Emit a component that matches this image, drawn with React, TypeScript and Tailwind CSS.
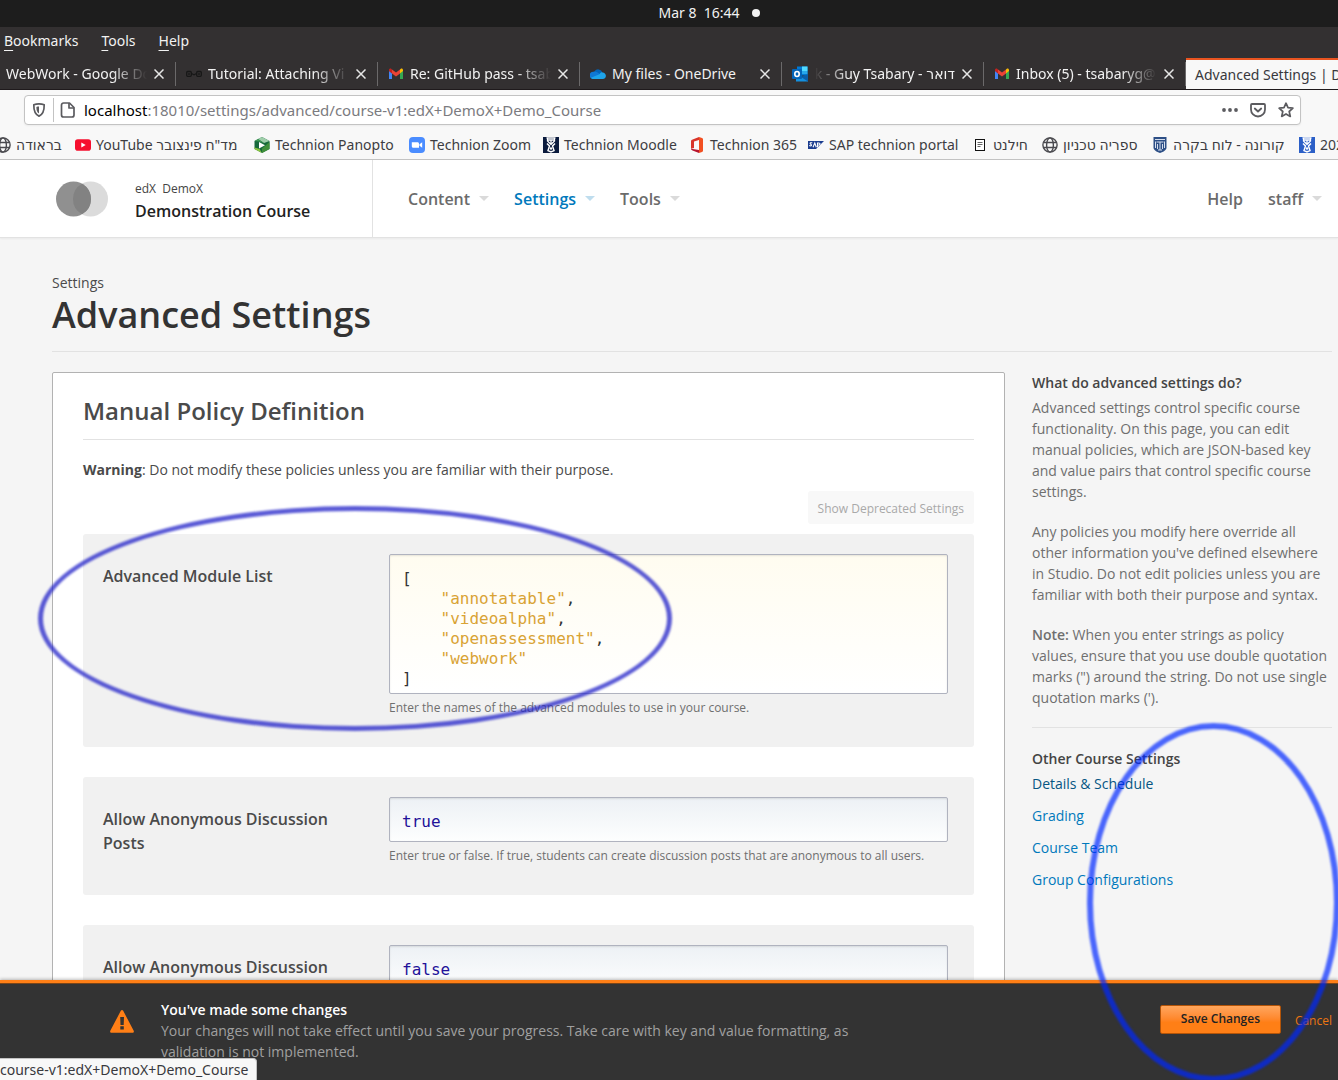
import type { ReactNode } from "react";

const sans = "font-['Open_Sans','Noto_Sans',sans-serif]";
const chrome = "font-['Noto_Sans','DejaVu_Sans',sans-serif]";
const mono = "font-['DejaVu_Sans_Mono',monospace]";

/* ---------- icons ---------- */

const GmailIcon = () => (
  <svg viewBox="0 0 16 16" className="size-4" aria-hidden="true">
    <path d="M1 3.500V13h3V7.200L1 4.800z" fill="#4285f4" />
    <path d="M12 7.200V13h3V4z" fill="#34a853" />
    <path d="M12 3.400v4l3-2.300V4c0-1.300-1.500-2-2.400-1.100z" fill="#fbbc04" />
    <path d="M4 3.400 8 6.600l4-3.200v4L8 10.600 4 7.400z" fill="#ea4335" />
    <path d="M1 4v1.100l3 2.300v-4l-.6-.5C2.400 2.100 1 2.800 1 4z" fill="#c5221f" />
  </svg>
);

const DocsIcon = () => (
  <svg viewBox="0 0 16 16" className="size-4" aria-hidden="true">
    <rect width="16" height="16" fill="#2684fc" />
    <path d="M4 5h8M4 8h8M4 11h5" stroke="#fff" />
  </svg>
);

const ChainIcon = () => (
  <svg viewBox="0 0 16 16" className="size-4" fill="none" stroke="#171717" strokeWidth="1.300" aria-hidden="true">
    <rect x=".7" y="5.500" width="4.600" height="4.800" rx="1" />
    <rect x="10.700" y="5.500" width="4.600" height="4.800" rx="1" />
    <path d="M3 7v2M13 7v2M5.500 7.500 8 8.800l2.500-1.300" />
  </svg>
);

const OneDriveIcon = () => (
  <svg viewBox="0 0 16 16" className="size-4" aria-hidden="true">
    <path d="M4.500 5.200A4.500 4.500 0 0 1 12.400 6.500L7 10z" fill="#0364b8" />
    <path d="M3.500 5.800c1.200-.5 2.400-.3 3.300.3L12 9.500 3 13A3.600 3.600 0 0 1 3.500 5.800z" fill="#0f78d4" />
    <path d="M9.500 8.200c.8-1.600 2-2 3-1.800 4.500.3 4.500 6.500.2 6.600H3.500c-1 0-2-.5-2.600-1.300z" fill="#1ea4ea" />
  </svg>
);

const OutlookIcon = () => (
  <svg viewBox="0 0 16 16" className="size-4" aria-hidden="true">
    <rect x="5" y=".5" width="10.500" height="9" fill="#0078d4" />
    <path d="M10 .5h5.500V5H10z" fill="#50d9ff" />
    <path d="M10 5h5.500v3H10z" fill="#28a8ea" />
    <path d="M4 8l6 3 6-3v7.500H4z" fill="#1490df" />
    <path d="M16 8v7.500L9 11z" fill="#0a5ea8" />
    <rect y="3" width="10" height="10" rx="1" fill="#0364b8" />
    <ellipse cx="5" cy="8" rx="2.200" ry="2.500" fill="none" stroke="#fff" strokeWidth="1.600" />
  </svg>
);

const GlobeIcon = () => (
  <svg viewBox="0 0 16 16" className="size-4" fill="none" stroke="#4a4a4f" strokeWidth="1.400" aria-hidden="true">
    <circle cx="8" cy="8" r="7.100" />
    <ellipse cx="8" cy="8" rx="3.400" ry="7.100" />
    <path d="M1.500 5.500h13M1.500 10.500h13" />
  </svg>
);

const YouTubeIcon = () => (
  <svg viewBox="0 0 16 16" className="size-4" aria-hidden="true">
    <rect y="2.300" width="16" height="11.400" rx="2.800" fill="#f60f2e" />
    <path d="M6.300 5.500v5L10.700 8z" fill="#fff" />
  </svg>
);

const PanoptoIcon = () => (
  <svg viewBox="0 0 16 16" className="size-4" aria-hidden="true">
    <path d="M8 0l7.500 4v8L8 16 .5 12V4z" fill="#17693c" />
    <path d="M8 0l7.500 4L10 6 4 2.100z" fill="#9fceaa" />
    <path d="M4 2.100 10 6 5 4.500.5 4z" fill="#3f9a56" />
    <path d="M15.500 5v7L8 16v-4.500z" fill="#3f8f3a" />
    <path d="M.5 10.500 5.500 12 8 16 .5 12z" fill="#8dc63f" />
    <path d="M5 5l6 3.200-6 3.300z" fill="#fff" />
  </svg>
);

const ZoomIcon = () => (
  <svg viewBox="0 0 16 16" className="size-4" aria-hidden="true">
    <rect width="16" height="16" rx="4" fill="#4a8cff" />
    <path d="M2.800 5.200h5.700c.9 0 1.500.6 1.500 1.500v4.100H4.300c-.9 0-1.500-.6-1.500-1.500zM10.500 7.200l2.700-1.900v5.400l-2.700-1.900z" fill="#fff" />
  </svg>
);

const CrestIcon = ({ fill }: { fill: string }) => (
  <svg viewBox="0 0 16 16" className="size-4" aria-hidden="true">
    <rect width="16" height="16" fill={fill} />
    <path d="M3.500 1h9M4 3h8M4.500 1v3l3 3M11.500 1v3l-3 3M8 3v5" stroke="#fff" strokeWidth="1.300" fill="none" />
    <path d="M4 6.500l2.500 2.500L5 13.500 8 15l3-1.500L9.500 9 12 6.500" stroke="#fff" strokeWidth="1.500" fill="none" />
    <circle cx="8" cy="11.500" r="1.200" fill="#fff" />
  </svg>
);

const OfficeIcon = () => (
  <svg viewBox="0 0 16 16" className="size-4" aria-hidden="true">
    <path d="M10 0 3 2.800C2.300 3 2 3.500 2 4.200v7.600L5 11V4.500L10 3z" fill="#d8342a" />
    <path d="M10 0l3 1c.7.200 1 .7 1 1.300v11.400c0 .6-.3 1.100-1 1.300l-3 1z" fill="#f25022" />
    <path d="M2 11.800 10 13v3l-6.500-2.600C2.400 13 2 12.600 2 11.800z" fill="#b7152f" />
  </svg>
);

const SapIcon = () => (
  <svg viewBox="0 0 16 16" className="size-4" aria-hidden="true">
    <path d="M0 4h16L8 12H0z" fill="#1b3d8f" />
    <path d="M4.300 5.800H2.500c-1.500 1.200 1.500 1.500 1 2.500-.3.800-1.500.6-2.300.2M5 10.200 6.800 6l1.500 4.200M9.500 10.200V6h1.300c1.800.2 1.600 2.300-1 2.300" stroke="#fff" strokeWidth="1.100" fill="none" />
  </svg>
);

const SheetIcon = () => (
  <svg viewBox="0 0 16 16" className="size-4" fill="none" aria-hidden="true">
    <rect x="3.500" y="2.500" width="9" height="11" fill="#fff" stroke="#111" />
    <path d="M5.500 5.500h5M5.500 7.500h5M5.500 9.500h3" stroke="#555" strokeWidth=".9" />
  </svg>
);

const ShieldCrestIcon = () => (
  <svg viewBox="0 0 16 16" className="size-4" aria-hidden="true">
    <path d="M1.500 0h13v10.500c0 2.500-3 4.500-6.500 5.500-3.500-1-6.500-3-6.500-5.500z" fill="#2d4f86" />
    <path d="M3 2.500h10M4.500 5h7M8 5v8M3.500 4.500v6.500M12.500 4.500v6.500M5.500 7v5M10.500 7v5M6 13h4" stroke="#d5deec" fill="none" />
  </svg>
);

const TrackingShieldIcon = () => (
  <svg viewBox="0 0 16 16" className="size-4" aria-hidden="true">
    <path d="M8 1.800c1.800 0 3.700.3 5.200.9.100 5.200-.7 9.400-5.200 11.400C3.500 12.100 2.700 7.900 2.800 2.700 4.300 2.100 6.200 1.800 8 1.800z" fill="none" stroke="#5b5b5f" strokeWidth="1.700" strokeLinejoin="round" />
    <path d="M8 4.500c-.9 0-1.800.1-2.600.4 0 3.200.5 5.300 2.600 6.600z" fill="#5b5b5f" />
  </svg>
);

const PageIcon = () => (
  <svg viewBox="0 0 16 16" className="size-4" fill="none" stroke="#5b5b5f" strokeWidth="1.700" strokeLinejoin="round" aria-hidden="true">
    <path d="M3.500 1h6l4.500 4.500V13a2 2 0 0 1-2 2H3.500a2 2 0 0 1-2-2V3a2 2 0 0 1 2-2z" />
    <path d="M9 1v5h5" />
  </svg>
);

const DotsIcon = () => (
  <svg viewBox="0 0 16 16" className="size-4" fill="#5b5b5f" aria-hidden="true">
    <circle cx="2" cy="8" r="1.900" />
    <circle cx="8" cy="8" r="1.900" />
    <circle cx="14" cy="8" r="1.900" />
  </svg>
);

const PocketIcon = () => (
  <svg viewBox="0 0 16 16" className="size-4" fill="none" stroke="#5b5b5f" strokeWidth="1.800" strokeLinecap="round" strokeLinejoin="round" aria-hidden="true">
    <path d="M2 2h12a1 1 0 0 1 1 1v4.500a7 7 0 0 1-14 0V3a1 1 0 0 1 1-1z" />
    <path d="M4.800 6.500 8 9.500l3.200-3" />
  </svg>
);

const StarIcon = () => (
  <svg viewBox="0 0 16 16" className="size-4" fill="none" stroke="#5b5b5f" strokeWidth="1.700" strokeLinejoin="round" aria-hidden="true">
    <path d="M8 1.200l2 4.500 4.900.5-3.700 3.300 1.100 4.900L8 11.900l-4.300 2.500 1.100-4.900L1.100 6.200 6 5.700z" />
  </svg>
);

const CloseIcon = () => (
  <svg viewBox="0 0 10 10" className="size-2.5" stroke="#e6e6e6" strokeWidth="1.500" aria-hidden="true">
    <path d="M.5.5l9 9M9.500.5l-9 9" />
  </svg>
);

const WarningIcon = () => (
  <svg viewBox="0 0 24 23" className="h-[23px] w-6 shrink-0" aria-hidden="true">
    <path d="M10.800.8c.5-1 1.900-1 2.400 0l10.500 20c.5 1-.1 2-1.200 2h-21c-1.100 0-1.700-1-1.200-2z" fill="#ff7f16" />
    <path d="M10.200 7h3.800l-.3 8h-3.200zM10.300 16.200h3.500v3.200h-3.500z" fill="#333" />
  </svg>
);

const LogoIcon = () => (
  <svg viewBox="0 0 52 36" className="h-9 w-[52px] shrink-0" role="img" aria-label="Studio">
    <circle cx="34.500" cy="18" r="17.500" fill="#dbdbdb" />
    <circle cx="17.500" cy="18" r="17.500" fill="#909090" />
    <path d="M26 2.700a17.500 17.500 0 0 1 0 30.600 17.500 17.500 0 0 1 0-30.600z" fill="#828282" />
  </svg>
);

const Caret = () => <span className="border-x-5 border-t-5 border-x-transparent border-t-current opacity-25" />;

/* ---------- browser window ---------- */

type Tab = { title: string; icon: ReactNode; fade: "right" | "left" | "none" };

const tabs: Tab[] = [
  { title: "WebWork - Google Do", icon: <DocsIcon />, fade: "right" },
  { title: "Tutorial: Attaching Vi", icon: <ChainIcon />, fade: "right" },
  { title: "Re: GitHub pass - tsab", icon: <GmailIcon />, fade: "right" },
  { title: "My files - OneDrive", icon: <OneDriveIcon />, fade: "none" },
  { title: "k - Guy Tsabary - דואר", icon: <OutlookIcon />, fade: "left" },
  { title: "Inbox (5) - tsabaryg@", icon: <GmailIcon />, fade: "right" },
];

const fades = {
  right: "[mask-image:linear-gradient(to_right,#000_75%,transparent)]",
  left: "justify-end [mask-image:linear-gradient(to_left,#000_75%,transparent)]",
  none: "",
};

const bookmarks = [
  { label: "בראודה", icon: <GlobeIcon />, width: "w-20" },
  { label: 'YouTube מד"ח פינצובר', icon: <YouTubeIcon />, width: "w-[179px]" },
  { label: "Technion Panopto", icon: <PanoptoIcon />, width: "w-[155px]" },
  { label: "Technion Zoom", icon: <ZoomIcon />, width: "w-[134px]" },
  { label: "Technion Moodle", icon: <CrestIcon fill="#0b1b3d" />, width: "w-[146px]" },
  { label: "Technion 365", icon: <OfficeIcon />, width: "w-[119px]" },
  { label: "SAP technion portal", icon: <SapIcon />, width: "w-[164px]" },
  { label: "חילנט", icon: <SheetIcon />, width: "w-[70px]" },
  { label: "ספריה טכניון", icon: <GlobeIcon />, width: "w-[110px]" },
  { label: "קורונה - לוח בקרה", icon: <ShieldCrestIcon />, width: "w-[147px]" },
  { label: "2021", icon: <CrestIcon fill="#2b5fc7" />, width: "w-20" },
];

function BrowserChrome() {
  return (
    <div className={`shrink-0 text-[15px] ${chrome}`}>
      <div className="flex h-[27px] items-center justify-center gap-3 bg-[#1d1d1d] pb-0.5 pl-20 text-sm text-[#f2f2f2]">
        <time className="whitespace-pre">Mar 8  16:44</time>
        <span className="size-2 rounded-full bg-[#f2f2f2]" />
      </div>

      <div className="border-b border-[#1f1a1c] bg-[#333031] text-[#f2f2f2]">
        <nav aria-label="Menu" className="flex h-[31px] items-center gap-[23px] px-1 pb-1 text-sm">
          {["Bookmarks", "Tools", "Help"].map((m) => (
            <button key={m} type="button">
              <span className="underline underline-offset-4">{m[0]}</span>
              {m.slice(1)}
            </button>
          ))}
        </nav>
        <div role="tablist" className="-ml-[26px] flex h-[31px] overflow-hidden text-sm">
          {tabs.map((t) => (
            <div key={t.title} className="flex w-[202px] shrink-0 items-center pl-2.5">
              {t.icon}
              <button
                type="button"
                role="tab"
                aria-selected="false"
                className={`ml-1.5 flex w-[141px] overflow-hidden whitespace-nowrap ${fades[t.fade]}`}
              >
                {t.title}
              </button>
              <button type="button" aria-label={`Close ${t.title}`} className="ml-[7px]">
                <CloseIcon />
              </button>
              <span className="ml-auto h-6 w-px bg-[#6b696a]" />
            </div>
          ))}
          <button
            type="button"
            role="tab"
            aria-selected="true"
            className="grow overflow-hidden border-t-2 border-[#e95420] bg-[#f8f8f8] pl-[9px] text-left whitespace-nowrap text-[#38383d]"
          >
            Advanced Settings | D
          </button>
        </div>
      </div>

      <div className="border-b border-[#c3c3c3] bg-[#f8f8f8] pt-[5px]">
        <div className="mr-[37px] ml-6 flex h-[30px] items-center rounded border border-[#c3c3c3] bg-white px-1.5 shadow-xs">
          <button type="button" aria-label="Tracking protection">
            <TrackingShieldIcon />
          </button>
          <span className="mr-1.5 ml-1.5 h-6 w-px bg-[#c3c3c3]" />
          <button type="button" aria-label="Site information">
            <PageIcon />
          </button>
          <div className="ml-2 grid grow items-center">
            <span aria-hidden="true" className="pointer-events-none col-start-1 row-start-1 text-[#7b7b80]">
              <span className="text-black">localhost</span>:18010/settings/advanced/course-v1:edX+DemoX+Demo_Course
            </span>
            <input
              aria-label="Address"
              className="col-start-1 row-start-1 w-full bg-transparent text-transparent caret-black outline-none"
              defaultValue="localhost:18010/settings/advanced/course-v1:edX+DemoX+Demo_Course"
            />
          </div>
          <div className="flex gap-3">
            <button type="button" aria-label="Page actions">
              <DotsIcon />
            </button>
            <button type="button" aria-label="Save to Pocket">
              <PocketIcon />
            </button>
            <button type="button" aria-label="Bookmark this page">
              <StarIcon />
            </button>
          </div>
        </div>
        <nav aria-label="Bookmarks" className="-ml-[5px] flex h-[34px] items-center overflow-hidden pt-1.5 text-sm text-[#3d3d42]">
          {bookmarks.map((b) => (
            <a key={b.label} href="#" className={`flex shrink-0 items-center gap-[5px] whitespace-nowrap ${b.width}`}>
              {b.icon}
              {b.label}
            </a>
          ))}
        </nav>
      </div>
    </div>
  );
}

/* ---------- course studio page ---------- */

function StudioHeader() {
  return (
    <header className="flex h-[78px] items-stretch border-b border-[#e2e2e2] bg-white pr-4 pl-14 font-semibold shadow-xs">
      <a href="#" className="flex w-[317px] shrink-0 items-center gap-[27px] border-r border-[#e2e2e2]">
        <LogoIcon />
        <span className="flex flex-col pt-1 text-[#222]">
          <span className="text-xs leading-5 font-normal text-[#444]">edX&nbsp; DemoX</span>
          <span className="text-base leading-6">Demonstration Course</span>
        </span>
      </a>
      <nav aria-label="Course" className="flex grow items-center gap-[25px] pl-[35px] text-base text-[#6b6b6b]">
        <button type="button" className="flex items-center gap-[9px]">
          Content <Caret />
        </button>
        <button type="button" className="flex items-center gap-[9px] text-[#0079bc]">
          Settings <Caret />
        </button>
        <button type="button" className="flex items-center gap-[9px]">
          Tools <Caret />
        </button>
        <a href="#" className="ml-auto">
          Help
        </a>
        <button type="button" className="flex items-center gap-[9px]">
          staff <Caret />
        </button>
      </nav>
    </header>
  );
}

const modules = ["annotatable", "videoalpha", "openassessment", "webwork"];

type PolicyProps = { id: string; label: string; help: string; children: ReactNode };

function Policy({ id, label, help, children }: PolicyProps) {
  return (
    <div className="flex rounded-[3px] bg-[#f1f1f1] py-5 pr-[26px] pl-5">
      <label htmlFor={id} className="w-[286px] shrink-0 pt-2.5 pr-10 text-base leading-6 font-semibold text-[#4a4a4a]">
        {label}
      </label>
      <div className="flex grow flex-col pb-[9px]">
        {children}
        <p className="mt-1 text-xs leading-5 text-[#6f6f6f]">{help}</p>
      </div>
    </div>
  );
}

function ValueField({ id, value }: { id: string; value: string }) {
  return (
    <input
      id={id}
      defaultValue={value}
      className={`h-[45px] w-full rounded-xs border border-[#b0b3bf] bg-linear-to-b from-[#edf1f5] to-[#fdfefe] px-3 pt-1 text-base text-[#221199] shadow-[inset_0_1px_2px_rgba(0,0,0,0.1)] ${mono}`}
    />
  );
}

function ModuleListField({ id }: { id: string }) {
  const source = `[\n${modules.map((m) => `    "${m}"`).join(",\n")}\n]`;
  return (
    <div
      className={`grid h-[140px] rounded-xs border border-[#b0b3bf] bg-linear-to-b from-[#fffcf0] to-white px-3 pt-3.5 text-base leading-5 shadow-[inset_0_1px_2px_rgba(0,0,0,0.1)] ${mono}`}
    >
      <pre aria-hidden="true" className={`pointer-events-none col-start-1 row-start-1 text-[#333] ${mono}`}>
        {"[\n"}
        {modules.map((m, i) => (
          <span key={m}>
            {"    "}
            <span className="text-[#d9a334]">{`"${m}"`}</span>
            {i < modules.length - 1 ? ",\n" : "\n"}
          </span>
        ))}
        {"]"}
      </pre>
      <textarea
        id={id}
        spellCheck={false}
        defaultValue={source}
        className="col-start-1 row-start-1 resize-none overflow-hidden bg-transparent text-transparent caret-black outline-none"
      />
    </div>
  );
}

function Sidebar() {
  return (
    <aside className="w-[300px] shrink-0 text-sm leading-[21px] text-[#6f6f6f]">
      <h3 className="mb-1 font-semibold text-[#444]">What do advanced settings do?</h3>
      <p className="mb-[19px]">
        Advanced settings control specific course functionality. On this page, you can edit manual policies, which are
        JSON-based key and value pairs that control specific course settings.
      </p>
      <p className="mb-[19px]">
        Any policies you modify here override all other information you've defined elsewhere in Studio. Do not edit
        policies unless you are familiar with both their purpose and syntax.
      </p>
      <p className="mb-[19px]">
        <strong className="font-semibold">Note:</strong> When you enter strings as policy values, ensure that you use
        double quotation marks (") around the string. Do not use single quotation marks (').
      </p>
      <h3 className="mb-1 border-t border-[#e2e2e2] pt-5 font-semibold text-[#444]">Other Course Settings</h3>
      <ul className="flex flex-col gap-[11px] text-[#0079bc]">
        <li>
          <a href="#" className="text-[#065683]">
            Details &amp; Schedule
          </a>
        </li>
        <li>
          <a href="#">Grading</a>
        </li>
        <li>
          <a href="#">Course Team</a>
        </li>
        <li>
          <a href="#">Group Configurations</a>
        </li>
      </ul>
    </aside>
  );
}

function SettingsPage() {
  return (
    <main className="pt-[34px] pr-1.5 pl-[52px]">
      <header className="mb-5 border-b border-[#e2e2e2] pb-3.5">
        <p className="text-sm leading-[21px] text-[#4a4a4a]">Settings</p>
        <h1 className="text-4xl leading-[44px] font-semibold text-[#333]">Advanced Settings</h1>
      </header>
      <div className="flex gap-[27px]">
        <section className="grow rounded-xs border border-[#b2b2b2] bg-white p-[30px] pt-[23px]">
          <h2 className="mb-5 border-b border-[#e2e2e2] pb-[13px] text-2xl leading-[30px] font-semibold text-[#4a4a4a]">
            Manual Policy Definition
          </h2>
          <p className="mb-[11px] text-sm leading-5 text-[#4a4a4a]">
            <strong className="font-bold">Warning</strong>: Do not modify these policies unless you are familiar with
            their purpose.
          </p>
          <div className="mb-2.5 flex justify-end">
            <button type="button" className="h-[33px] rounded-[3px] bg-[#f8f8f8] px-2.5 pt-0.5 text-xs text-[#a9a9a9]">
              Show Deprecated Settings
            </button>
          </div>
          <div className="flex flex-col gap-[30px]">
            <Policy
              id="advanced-modules"
              label="Advanced Module List"
              help="Enter the names of the advanced modules to use in your course."
            >
              <ModuleListField id="advanced-modules" />
            </Policy>
            <Policy
              id="anonymous-all"
              label="Allow Anonymous Discussion Posts"
              help="Enter true or false. If true, students can create discussion posts that are anonymous to all users."
            >
              <ValueField id="anonymous-all" value="true" />
            </Policy>
            <Policy id="anonymous-peers" label="Allow Anonymous Discussion" help="Enter true or false.">
              <ValueField id="anonymous-peers" value="false" />
            </Policy>
          </div>
        </section>
        <Sidebar />
      </div>
    </main>
  );
}

function ChangesBar() {
  return (
    <div className="relative flex h-[100px] shrink-0 items-start border-t-3 border-[#ff7f16] bg-[#333] pt-4 pr-1.5 pl-[110px] text-sm leading-[21px] text-[#a0a0a0] shadow-[0_-1px_3px_rgba(0,0,0,0.25),inset_0_1px_0_#7a4519]">
      <div className="mt-[11px] mr-[27px]">
        <WarningIcon />
      </div>
      <div className="max-w-[700px]">
        <h2 className="font-semibold text-white">You've made some changes</h2>
        <p>
          Your changes will not take effect until you save your progress. Take care with key and value formatting, as
          validation is not implemented.
        </p>
      </div>
      <div className="mt-1.5 ml-auto flex items-center gap-3.5 text-xs">
        <button
          type="button"
          className="h-[29px] w-[121px] rounded-xs border border-[#b35408] bg-linear-to-b from-[#ffa65c] to-[#ff7f16] to-60% pb-0.5 font-semibold text-[#222]"
        >
          Save Changes
        </button>
        <button type="button" className="pt-0.5 text-[#ed7612]">
          Cancel
        </button>
      </div>
      <div
        className={`absolute bottom-0 left-0 rounded-tr border-t border-r border-[#c3c3c3] bg-[#f8f8f8] pr-2 text-sm leading-[21px] text-[#38383d] ${chrome}`}
      >
        course-v1:edX+DemoX+Demo_Course
      </div>
    </div>
  );
}

export default function App() {
  return (
    <div className={`relative flex h-screen flex-col overflow-hidden bg-[#f5f5f5] ${sans}`}>
      <BrowserChrome />
      <div className="min-h-0 grow overflow-hidden">
        <StudioHeader />
        <SettingsPage />
      </div>
      <ChangesBar />
      <div className="pointer-events-none absolute top-[506px] left-[38px] h-[225px] w-[634px] rounded-[50%] border-5 border-[#2323c8]/75 blur-[1px]" />
      <div className="pointer-events-none absolute top-[723px] left-[1087px] h-[359px] w-[253px] rounded-[50%] border-6 border-[#0028ff]/70 blur-[1px]" />
    </div>
  );
}
